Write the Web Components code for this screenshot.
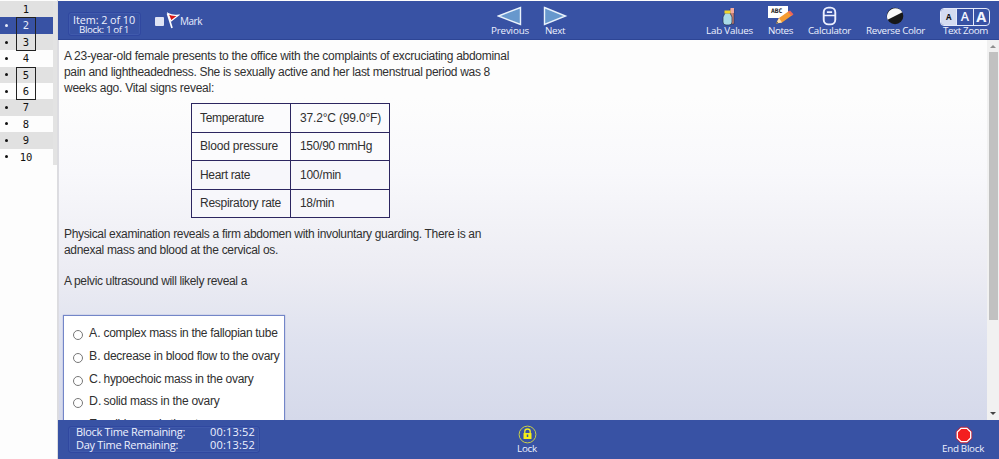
<!DOCTYPE html>
<html lang="en"><head><meta charset="utf-8"><title>Exam</title>
<style>
body{margin:0;width:999px;height:459px;overflow:hidden;background:#fdfdfd;font-family:"Liberation Sans",Arial,sans-serif}
</style></head><body>
<exam-app></exam-app>
<script>
const define=(name,html,setup)=>{
  const t=document.createElement('template');t.innerHTML=html;
  customElements.define(name,class extends HTMLElement{
    connectedCallback(){
      if(this.shadowRoot)return;
      this.attachShadow({mode:'open'}).appendChild(t.content.cloneNode(true));
      if(setup)setup(this,this.shadowRoot);
    }
  });
};

/* One line of text, tracked so that it fills the width given in "w". */
define('fit-text',`<style>:host{display:block;white-space:pre}span{display:inline-block}</style><span><slot></slot></span>`,(el,r)=>{
  const s=r.querySelector('span'),w=+el.getAttribute('w');
  const n=el.textContent.length;
  const d=(w-s.getBoundingClientRect().width)/n;
  s.style.letterSpacing=d.toFixed(3)+'px';
});

define('item-row',`<style>
:host{display:grid;grid-template-columns:16px 20px 1fr;height:16.4px;width:53px;box-sizing:border-box;font:10px/16px "DejaVu Sans",sans-serif;color:#111;background:#fdfdfd}
:host([alt]){background:#e1e1e1}
:host([active]){background:#3852a4;color:#e8ecfa}
i{justify-self:center;align-self:center;width:3px;height:3px;border-radius:50%;background:currentColor;margin-right:3px}
:host([first]) i{visibility:hidden}
b{font-weight:400;text-align:center;box-sizing:border-box;border:0 solid #222;font-family:"DejaVu Sans Mono",monospace;font-size:10.5px}
:host([top]) b{border-width:1px 1px 0;line-height:15px}
:host([bottom]) b{border-width:0 1px 1px}
</style><i></i><b><slot></slot></b>`);

define('item-list',`<style>
:host{display:block;width:58px;height:459px;flex:none;padding-top:1px;box-sizing:border-box;background:#fdfdfd;border-right:1px solid #dcdcdf}
div{width:53px;height:164px;border-right:4px solid #e3e3e3}
</style><div>
<item-row alt first>1</item-row><item-row active top>2</item-row><item-row alt bottom>3</item-row><item-row>4</item-row>
<item-row alt top>5</item-row><item-row bottom>6</item-row><item-row alt>7</item-row><item-row>8</item-row><item-row alt>9</item-row><item-row>10</item-row></div>`);

define('tool-button',`<style>
:host{display:flex;flex-direction:column;align-items:flex-start;color:#edf1ff;font:9.8px/13px "Open Sans",sans-serif}
.i{height:19px;display:flex;align-items:center;justify-content:center}
</style><div class="i"><slot name="icon"></slot></div><slot></slot>`);

define('info-panel',`<style>
:host{display:block;box-sizing:border-box;border:1px solid #3048a0;border-radius:3px;box-shadow:inset 0 0 0 1px #405aac;color:#eef1ff;font-family:"Open Sans",sans-serif}
</style><slot></slot>`);

define('exam-header',`<style>
:host{display:grid;grid-template-columns:10px 73px 13px 50px 287px 54px 161px 62px 40px 58px 75px 58px;height:39px;background:#3852a4;border-bottom:1px solid #2d4595;box-sizing:border-box}
info-panel{height:24px;margin-top:11px}
.a{font-size:10.8px;line-height:10px;margin:2px 0 0 4px}.b{font-size:9.8px;line-height:10px;margin:0 0 0 10px}
.mark{display:flex;color:#e9edff;font:10px/13px "Open Sans",sans-serif;padding-top:11px}
.cb{flex:none;width:9px;height:9px;background:#dfe4f4;border-radius:1px;margin:5px 0 0 1px}
.mark svg{flex:none;margin:0 0 0 2px}
.mark fit-text{margin-top:3px}
tool-button{padding-top:4px}
.zoom{display:flex;width:50px;height:18px;border:1px solid #e5eafa;border-radius:4px;box-sizing:border-box;color:#f4f6ff;font-family:"Open Sans",sans-serif;font-weight:700;line-height:16px;text-align:center}
.zoom span{flex:1;border-left:1px solid #e5eafa}.zoom span:first-child{background:#d4dbf0;color:#111;border:0;border-radius:3px 0 0 3px;font-size:8px}
</style>
<span></span><info-panel><fit-text class="a" w="62">Item: 2 of 10</fit-text><fit-text class="b" w="50">Block: 1 of 1</fit-text></info-panel><span></span>
<div class="mark"><div class="cb"></div><svg width="14" height="18" viewBox="0 0 14 18"><path d="M1.5 1.5L6 16" stroke="#fff" stroke-width="1.7"/><path d="M2 1.5Q6 4 12.5 3.2L5 9Z" fill="#d81515" stroke="#fff" stroke-width="1.2"/></svg><fit-text w="22">Mark</fit-text></div>
<span></span>
<tool-button><svg slot="icon" style="margin-left:6px;margin-top:2px" width="26" height="20" viewBox="0 0 26 20"><path d="M1.5 10L23.5 1.5V18.5Z" fill="#6798cd" stroke="#e9f2fb" stroke-width="1.4"/></svg><fit-text w="38">Previous</fit-text></tool-button>
<tool-button><svg slot="icon" style="margin-left:-3px;margin-top:2px" width="26" height="20" viewBox="0 0 26 20"><path d="M2.5 1.5L23.5 10L2.5 18.5Z" fill="#6798cd" stroke="#e9f2fb" stroke-width="1.4"/></svg><fit-text w="20">Next</fit-text></tool-button>
<tool-button style="grid-column:8"><svg slot="icon" style="margin-left:15px;margin-top:3px" width="16" height="19" viewBox="0 0 16 19"><path d="M9 2h4v15H9z" fill="#cf8274" stroke="#27304d" stroke-width=".6"/><path d="M9.5 1h3.5v5H9.5z" fill="#f3aaa0"/><path d="M4 6h5l2 4v5q0 3-3 3H5q-3 0-3-3v-5z" fill="#aadbe7" stroke="#23304e" stroke-width=".7"/><path d="M3.5 3.5h6v3h-6z" fill="#f2d72a"/></svg><fit-text w="47">Lab Values</fit-text></tool-button>
<tool-button><svg slot="icon" width="27" height="21" viewBox="0 0 27 21"><path d="M0 2h20v12H0z" fill="#fff"/><text x="3" y="9" font-family="DejaVu Sans Mono" font-weight="700" font-size="6.3" fill="#111">ABC</text><path d="M8 19.5L11 14L21 7L24.5 11L14 18.5Z" fill="#f49b32"/><path d="M20 7.8L22 6.5L25.5 10.3L23.5 12Z" fill="#ef665a"/><path d="M8 19.5L11 14L14 18.5Z" fill="#ffe1ad"/><path d="M8 19.5L9 17.5L10 19Z" fill="#333"/></svg><fit-text w="25">Notes</fit-text></tool-button>
<tool-button><svg slot="icon" style="margin-left:14px;margin-top:2px" width="15" height="20" viewBox="0 0 14 19"><rect x="1.5" y="1.5" width="11" height="16" rx="4.5" fill="none" stroke="#eef1ff" stroke-width="1.8"/><path d="M1.5 9h11M4.5 5.8h5" stroke="#eef1ff" stroke-width="1.5"/></svg><fit-text w="43">Calculator</fit-text></tool-button>
<tool-button><svg slot="icon" style="margin-left:20px;margin-top:2px" width="18" height="18" viewBox="0 0 18 18"><circle cx="9" cy="9" r="8.3" fill="#171717"/><path d="M1.6 12.7A8.3 8.3 0 0 1 16.4 5.3Z" fill="#f7f7f7"/></svg><fit-text w="59">Reverse Color</fit-text></tool-button>
<tool-button><div slot="icon" class="zoom" style="margin-left:-1px;margin-top:4px"><span>A</span><span style="font-weight:600;font-size:12.5px">A</span><span style="font-size:14.5px">A</span></div><fit-text style="margin-left:2px" w="45">Text Zoom</fit-text></tool-button>`);

define('vital-signs',`<style>
:host{display:grid;grid-template-columns:98px 98px;grid-auto-rows:27.5px;gap:1px;padding:1px;background:#2c2660;width:197px;height:113px;margin-left:127px}
div{background:#fbfbfd;padding-left:8px;display:flex;align-items:center;font:12px/14px "Liberation Sans",sans-serif;color:#303030}
div:nth-child(odd){padding-left:9px}
div:nth-of-type(odd){padding-left:8px}
div:nth-of-type(even){padding-left:9px}
div:nth-of-type(n+5){background:#f7f7fb}
</style>
<div><fit-text w="64">Temperature</fit-text></div><div><fit-text w="81">37.2°C (99.0°F)</fit-text></div>
<div><fit-text w="78">Blood pressure</fit-text></div><div><fit-text w="72">150/90 mmHg</fit-text></div>
<div><fit-text w="50">Heart rate</fit-text></div><div><fit-text w="41">100/min</fit-text></div>
<div><fit-text w="81">Respiratory rate</fit-text></div><div><fit-text w="34">18/min</fit-text></div>`);

define('answer-choice',`<style>
:host{display:flex;height:22.8px;align-items:flex-start;color:#303030;font:12px/14px "Liberation Sans",sans-serif}
i{width:8px;height:8px;border:1px solid #777;border-radius:50%;background:#fff;margin:4px 6px 0 9px;flex:none}
b{font:12.3px/14px "Liberation Sans",sans-serif;width:14.5px;flex:none}
</style><i></i><b><slot name="k"></slot></b><slot></slot>`);

define('question-view',`<style>
:host{display:flex;height:380px;overflow:hidden;box-sizing:border-box;border-left:1px solid #dcdce2;background:linear-gradient(#fdfdfd 0 15%,#f8f8fb 35%,#ececf3 61%,#dfe2ef 79%,#d5d9ea 100%)}
main{flex:1;padding:8px 0 0 5px;font:12px/16px "Liberation Sans",sans-serif;color:#303030}
vital-signs{margin-top:7px}
.p{margin-top:8px}.q{margin-top:15px}
.box{margin:26px 0 0 -1px;width:220px;height:140px;border:1px solid #7386c8;background:#fff;padding-top:10px;box-shadow:0 0 1px #8190cc}
aside{width:12px;background:#f1f1f1;display:flex;flex-direction:column;align-items:center;justify-content:space-between;height:380px}
aside:before,aside:after{content:"";border:3px solid transparent;margin-top:2px}
aside:before{border-bottom-color:#8f8f8f}aside:after{border-top-color:#444;margin:0 0 2px}
.thumb{width:9px;height:268px;background:#c1c1c1;margin-top:4px;margin-bottom:auto}
</style><main>
<fit-text w="445">A 23-year-old female presents to the office with the complaints of excruciating abdominal</fit-text>
<fit-text w="426">pain and lightheadedness. She is sexually active and her last menstrual period was 8</fit-text>
<fit-text w="150">weeks ago. Vital signs reveal:</fit-text>
<vital-signs></vital-signs>
<fit-text class="p" w="417">Physical examination reveals a firm abdomen with involuntary guarding. There is an</fit-text>
<fit-text w="214">adnexal mass and blood at the cervical os.</fit-text>
<fit-text class="q" w="183">A pelvic ultrasound will likely reveal a</fit-text>
<div class="box">
<answer-choice><span slot="k">A.</span><fit-text w="174">complex mass in the fallopian tube</fit-text></answer-choice>
<answer-choice><span slot="k">B.</span><fit-text w="176">decrease in blood flow to the ovary</fit-text></answer-choice>
<answer-choice><span slot="k">C.</span><fit-text w="150">hypoechoic mass in the ovary</fit-text></answer-choice>
<answer-choice><span slot="k">D.</span><fit-text w="116">solid mass in the ovary</fit-text></answer-choice>
<answer-choice><span slot="k">E.</span><fit-text w="116">solid mass in the uterus</fit-text></answer-choice>
</div></main><aside><div class="thumb"></div></aside>`);

define('exam-footer',`<style>
:host{display:grid;grid-template-columns:10px 192px 257px 1fr 57px;height:39px;background:#3852a4}
info-panel{height:27px;margin-top:6px;display:grid;grid-template-columns:134px 1fr;padding:0 0 3px 7px;align-content:center;font-size:11px;line-height:13px}
tool-button{padding-top:5px}
tool-button fit-text{margin-top:-2px}
tool-button svg{display:block}
</style><span></span><info-panel><fit-text w="109">Block Time Remaining:</fit-text><fit-text w="45">00:13:52</fit-text><fit-text w="102">Day Time Remaining:</fit-text><fit-text w="45">00:13:52</fit-text></info-panel>
<span></span><tool-button><svg slot="icon" style="margin-left:1px" width="19" height="19" viewBox="0 0 19 19"><circle cx="9.5" cy="9.5" r="8.4" fill="none" stroke="#c8cf48" stroke-width="1"/><path d="M6.8 8V6.5Q6.8 4 9.5 4T12.2 6.5V8" fill="none" stroke="#f3ee22" stroke-width="1.3"/><rect x="5.5" y="8" width="8" height="6" rx=".6" fill="#f4ee18"/><path d="M9.5 9.5v2.5" stroke="#3852a4" stroke-width="1.5"/></svg><fit-text w="20">Lock</fit-text></tool-button>
<tool-button><svg slot="icon" style="margin-left:13px" width="18" height="18" viewBox="0 0 18 18"><path d="M5.6.8h6.8l4.8 4.8v6.8l-4.8 4.8H5.6L.8 12.4V5.6Z" fill="#bd2038"/><path d="M6.1 2.3h5.8l3.8 3.8v5.8l-3.8 3.8H6.1l-3.8-3.8V6.1Z" fill="#f31f1f" stroke="#fff" stroke-width="1.3"/></svg><fit-text w="42">End Block</fit-text></tool-button>`);

define('exam-app',`<style>
:host{display:flex;width:999px;height:459px;box-sizing:border-box}
section{width:941px;display:flex;flex-direction:column;padding-top:1px;box-sizing:border-box}
exam-header,question-view,exam-footer{flex:none}
</style><item-list></item-list><section><exam-header></exam-header><question-view></question-view><exam-footer></exam-footer></section>`);
</script></body></html>
